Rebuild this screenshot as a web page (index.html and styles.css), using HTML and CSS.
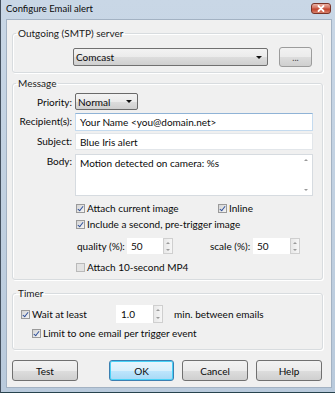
FILE: index.html
```html
<!DOCTYPE html>
<html lang="en">
<head>
    <meta charset="UTF-8">
    <title>Configure Email alert</title>
    <link rel="stylesheet" href="styles.css">
</head>
<body>

<div class="window">
    <div class="titlebar">
        <span class="title">Configure Email alert</span>
        <span class="close">
            <svg width="20" height="11" viewBox="0 0 20 11"><path d="M7.5 3 L12.5 8 M12.5 3 L7.5 8" stroke="#fff" stroke-width="1.8" stroke-linecap="round"/></svg>
        </span>
    </div>

    <div class="client">
        <fieldset class="group group-smtp">
            <legend>Outgoing (SMTP) server</legend>
            <div class="smtp-row">
                <div class="combo combo-server"><span>Comcast</span><span class="arrow"></span></div>
                <div class="btn btn-dots">...</div>
            </div>
        </fieldset>

        <fieldset class="group group-message">
            <legend>Message</legend>
            <div class="row row-priority">
                <span class="lbl">Priority:</span>
                <div class="combo combo-priority"><span>Normal</span><span class="arrow"></span></div>
            </div>
            <div class="row row-recipient">
                <span class="lbl">Recipient(s):</span>
                <div class="field field-focus">Your Name &lt;you@domain.net&gt;</div>
            </div>
            <div class="row row-subject">
                <span class="lbl">Subject:</span>
                <div class="field field-plain">Blue Iris alert</div>
            </div>
            <div class="row row-body">
                <span class="lbl">Body:</span>
                <div class="field field-body">
                    <span class="body-text">Motion detected on camera: %s</span>
                    <span class="vscroll"><span class="up"></span><span class="down"></span></span>
                </div>
            </div>

            <div class="opts">
                <div class="opt-row">
                    <span class="check check-wide"><span class="cb on"></span>Attach current image</span>
                    <span class="check"><span class="cb on"></span>Inline</span>
                </div>
                <div class="opt-row">
                    <span class="check"><span class="cb on"></span>Include a second, pre-trigger image</span>
                </div>
                <div class="opt-row opt-spins">
                    <span class="spin-lbl">quality (%):</span>
                    <div class="spin"><span class="val">50</span><span class="arrows"><span class="up"></span><span class="down"></span></span></div>
                    <span class="spin-lbl spin-lbl-scale">scale (%):</span>
                    <div class="spin spin-scale"><span class="val">50</span><span class="arrows"><span class="up"></span><span class="down"></span></span></div>
                </div>
                <div class="opt-row">
                    <span class="check"><span class="cb off"></span>Attach 10-second MP4</span>
                </div>
            </div>
        </fieldset>

        <fieldset class="group group-timer">
            <legend>Timer</legend>
            <div class="timer-row timer-wait">
                <span class="check check-wait"><span class="cb on"></span>Wait at least</span>
                <div class="spin spin-wait"><span class="val">1.0</span><span class="arrows"><span class="up"></span><span class="down"></span></span></div>
                <span class="unit">min. between emails</span>
            </div>
            <div class="timer-row timer-limit">
                <span class="check"><span class="cb on"></span>Limit to one email per trigger event</span>
            </div>
        </fieldset>

        <div class="buttons">
            <div class="btn btn-main">Test</div>
            <div class="btn btn-main btn-ok">OK</div>
            <div class="btn btn-main">Cancel</div>
            <div class="btn btn-main">Help</div>
        </div>
    </div>
</div>

</body>
</html>
```

FILE: styles.css
```css
body {
    margin: 0;
    font-family: Lato, "Open Sans", sans-serif;
    font-size: 10px;
    color: #0a0a0a;
}

.window {
    width: 335px;
    height: 393px;
    box-sizing: border-box;
    display: flex;
    flex-direction: column;
    padding: 0 3px 4px 5px;
    background: linear-gradient(to bottom, #c9d7e6, #b9cadc);
    border-left: 1px solid #44505e;
    border-bottom: 1px solid #27434d;
}

.titlebar {
    height: 19px;
    display: flex;
    align-items: center;
}

.title {
    font-size: 9.5px;
    margin-top: -2px;
}

.close {
    margin-left: auto;
    margin-right: 1px;
    margin-top: -3px;
    width: 20px;
    height: 11px;
    border: 1px solid #7a3327;
    border-radius: 3px;
    background: linear-gradient(to bottom, #eab1a4, #d36f5c 45%, #c2412a 55%, #d7826d);
    box-sizing: border-box;
    display: flex;
}

.close svg {
    margin: -1px;
}

.client {
    flex: 1;
    background: #f0f0f0;
    border: 1px solid #a3b2c3;
    display: flex;
    flex-direction: column;
}

/* group boxes */
.group {
    margin: 0 8px 0 5px;
    padding: 0;
    border: 1px solid #d8dcdf;
    border-radius: 3px;
    box-shadow: inset 1px 1px 0 #fff, 1px 1px 0 #fff;
    min-inline-size: 0;
    box-sizing: border-box;
}

.group legend {
    padding: 0 2px;
    margin-left: 3px;
    line-height: 13px;
    color: #1a1a1a;
}

.group-smtp {
    margin-top: 7px;
    height: 46px;
}

.smtp-row {
    display: flex;
    align-items: center;
    padding: 7px 0 0 60px;
}

.combo {
    height: 18px;
    box-sizing: border-box;
    display: flex;
    align-items: center;
    padding-left: 2px;
    border: 1px solid #707070;
    border-radius: 2px;
    background: linear-gradient(to bottom, #f3f3f3, #ebebeb 50%, #dddddd 51%, #cfcfcf);
}

.combo span:first-child {
    flex: 1;
}

.arrow {
    width: 0;
    height: 0;
    margin-right: 5px;
    border-left: 3px solid transparent;
    border-right: 3px solid transparent;
    border-top: 3px solid #111;
}

.combo-server {
    width: 195px;
}

.btn {
    box-sizing: border-box;
    display: flex;
    align-items: center;
    justify-content: center;
    border: 1px solid #707070;
    border-radius: 3px;
    background: linear-gradient(to bottom, #f2f2f2, #ebebeb 50%, #dddddd 51%, #cfcfcf);
}

.btn-dots {
    width: 33px;
    height: 20px;
    margin-left: 11px;
    font-size: 9px;
    color: #444;
    border-color: #9c9c9c;
}

/* message */
.group-message {
    margin-top: 4px;
    height: 203px;
}

.row {
    display: flex;
    align-items: center;
}

.lbl {
    width: 59px;
    text-align: right;
    margin-right: 3px;
}

.row-priority {
    margin-top: 3px;
}

.combo-priority {
    width: 63px;
    height: 17px;
    border-color: #6a6a6a;
}

.field {
    width: 238px;
    box-sizing: border-box;
    background: #fff;
    padding-left: 4px;
    display: flex;
    align-items: center;
}

.field-focus {
    height: 18px;
    margin-top: 3px;
    border: 1px solid #c5dbef;
    border-top-color: #8fb3d6;
}

.field-plain {
    height: 17px;
    margin-top: 2px;
    border: 1px solid #e2e6ea;
}

.row-body {
    align-items: flex-start;
}

.row-body .lbl {
    padding-top: 5px;
}

.field-body {
    height: 42px;
    margin-top: 4px;
    border: 1px solid #d6dbe0;
    align-items: flex-start;
    padding-right: 1px;
}

.body-text {
    flex: 1;
    padding-top: 2px;
}

.vscroll {
    width: 10px;
    height: 100%;
    display: flex;
    flex-direction: column;
    justify-content: space-between;
    align-items: center;
    padding: 4px 0;
    box-sizing: border-box;
}

.up, .down {
    width: 0;
    height: 0;
    border-left: 2px solid transparent;
    border-right: 2px solid transparent;
}

.up {
    border-bottom: 2px solid #9a9a9a;
}

.down {
    border-top: 2px solid #9a9a9a;
}

.opts {
    padding: 4px 0 0 63px;
}

.opt-row {
    height: 16px;
    display: flex;
    align-items: center;
}

.check {
    display: flex;
    align-items: center;
}

.check-wide {
    width: 142px;
}

.cb {
    width: 9px;
    height: 9px;
    box-sizing: border-box;
    margin-right: 2px;
    border: 1px solid #9a9a9a;
    background: linear-gradient(135deg, #d4d4d4, #f4f4f4);
    position: relative;
}

.cb.on::after {
    content: "";
    position: absolute;
    left: 2px;
    top: 0;
    width: 2px;
    height: 5px;
    border-right: 1.5px solid #2d4f9a;
    border-bottom: 1.5px solid #2d4f9a;
    transform: rotate(38deg);
}

.cb.off {
    border-color: #b9b9b9;
    background: #e3e3e3;
}

.opt-spins {
    height: 18px;
    margin: 5px 0 4px;
}

.spin-lbl {
    width: 50px;
    padding-left: 1px;
}

.spin-lbl-scale {
    margin-left: 36px;
    width: 43px;
}

.spin {
    width: 46px;
    height: 16px;
    display: flex;
}

.spin-scale {
    width: 47px;
}

.spin .val {
    flex: 1;
    background: #fff;
    padding-left: 4px;
    display: flex;
    align-items: center;
}

.arrows {
    width: 10px;
    box-sizing: border-box;
    display: flex;
    flex-direction: column;
    justify-content: space-around;
    align-items: center;
    border: 1px solid #cfcfcf;
    background: linear-gradient(to right, #e8e8e8, #f6f6f6);
}

/* timer */
.group-timer {
    margin-top: 7px;
    height: 63px;
}

.timer-row {
    display: flex;
    align-items: center;
    padding-left: 8px;
}

.timer-wait {
    margin-top: 5px;
}

.check-wait {
    width: 95px;
}

.spin-wait {
    width: 47px;
    height: 18px;
}

.spin-wait .val {
    padding-left: 5px;
}

.unit {
    margin-left: 11px;
}

.timer-limit {
    padding-left: 19px;
    margin-top: 2px;
    height: 16px;
}

/* bottom buttons */
.buttons {
    display: flex;
    margin: 10px 0 0 5px;
}

.btn-main {
    width: 66px;
    height: 21px;
    margin-right: 8px;
}

.btn-main:first-child {
    margin-right: 31px;
}

.btn-ok {
    width: 65px;
    border-color: #3c7fb1;
    box-shadow: inset 0 0 0 1px #48d2f7;
    background: linear-gradient(to bottom, #eaf6fd, #d9f0fc 50%, #bee6fd 51%, #a7d9f5);
}
```
